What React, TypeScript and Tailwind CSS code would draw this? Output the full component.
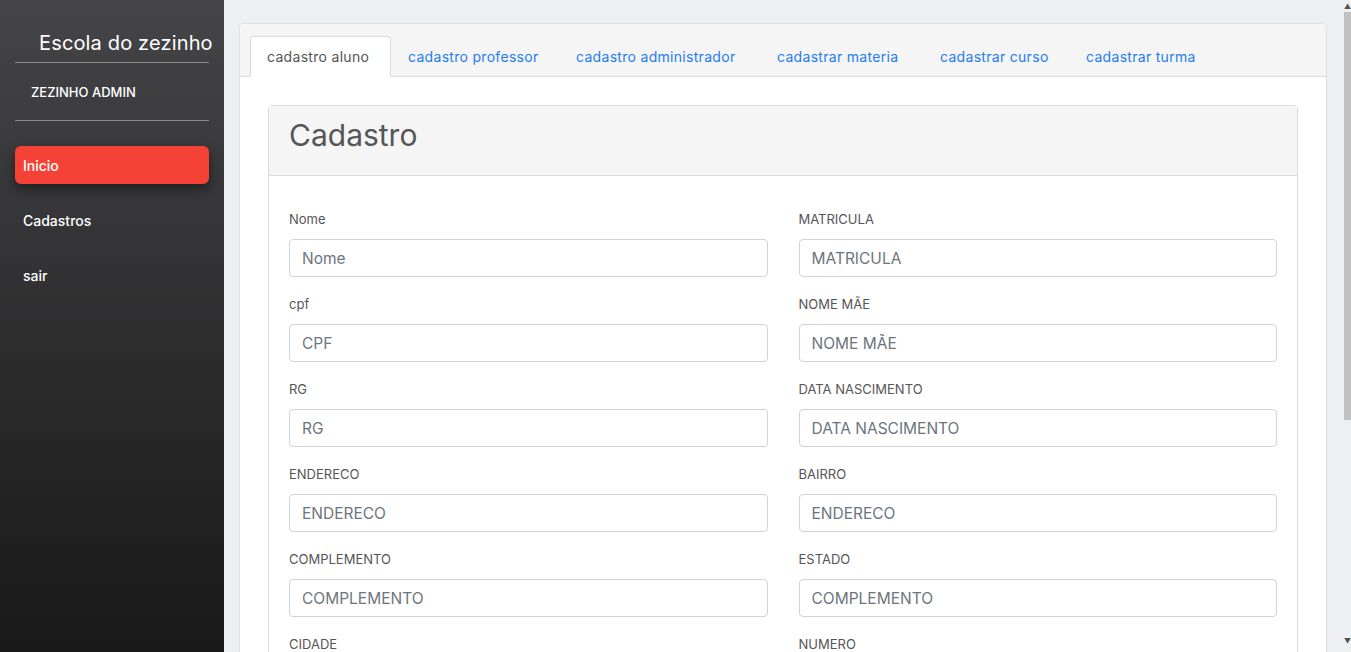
const tabs = [
  { label: "cadastro aluno", w: "w-[141px]", active: true },
  { label: "cadastro professor", w: "w-[168px]" },
  { label: "cadastro administrador", w: "w-[201px]" },
  { label: "cadastrar materia", w: "w-[163px]" },
  { label: "cadastrar curso", w: "w-[146px]" },
  { label: "cadastrar turma", w: "w-[150px]" },
];

const fields: [string, string][] = [
  ["Nome", "Nome"],
  ["MATRICULA", "MATRICULA"],
  ["cpf", "CPF"],
  ["NOME MÃE", "NOME MÃE"],
  ["RG", "RG"],
  ["DATA NASCIMENTO", "DATA NASCIMENTO"],
  ["ENDERECO", "ENDERECO"],
  ["BAIRRO", "ENDERECO"],
  ["COMPLEMENTO", "COMPLEMENTO"],
  ["ESTADO", "COMPLEMENTO"],
  ["CIDADE", "CIDADE"],
  ["NUMERO", "NUMERO"],
  ["CEP", "CEP"],
  ["TELEFONE", "TELEFONE"],
];

function Field({ label, placeholder }: { label: string; placeholder: string }) {
  return (
    <div className="mb-[17px]">
      <label className="block h-5 leading-5 text-[13px] text-[#555] mb-[10px]">{label}</label>
      <input
        placeholder={placeholder}
        className="block w-full h-[38px] px-[12px] border border-[#ced4da] rounded-[4px] bg-white text-[15.5px] text-[#495057] placeholder:text-[#6c757d] outline-none"
      />
    </div>
  );
}

export default function App() {
  return (
    <div
      className="flex h-screen overflow-hidden bg-[#eeeff3]"
      style={{ fontFamily: "Inter, 'Open Sans', sans-serif" }}
    >
      {/* Sidebar */}
      <aside className="w-[224px] shrink-0 h-full bg-gradient-to-b from-[#454548] to-[#191919] text-white px-[15px]">
        <div className="h-[63px] border-b border-white/40 pl-[24px] pt-[30px] whitespace-nowrap">
          <span className="text-[20px] leading-[26px] font-normal tracking-[0.15px]">Escola do zezinho</span>
        </div>
        <div className="h-[58px] border-b border-white/40 pl-[16px] pt-[2px] flex items-center text-[13px] font-medium">
          ZEZINHO ADMIN
        </div>
        <nav className="mt-[25px] flex flex-col gap-[17px]">
          <a className="h-[38px] flex items-center px-[8px] rounded-[6px] bg-[#f44336] text-[14px] font-medium shadow-[0_5px_12px_rgba(0,0,0,0.45)]">
            Inicio
          </a>
          <a className="h-[38px] flex items-center px-[8px] text-[14px] font-medium">Cadastros</a>
          <a className="h-[38px] flex items-center px-[8px] text-[14px] font-medium">sair</a>
        </nav>
      </aside>

      {/* Main */}
      <main className="flex-1 h-full overflow-hidden pl-[15px] pr-[9px] pt-[23px]">
        <div className="border border-[#dfdfe2] rounded-[5px] bg-white overflow-hidden">
          <div className="bg-[#f5f5f6] border-b border-[#dcdcdf] px-[10px] pt-[12px] flex">
            {tabs.map((t) =>
              t.active ? (
                <div
                  key={t.label}
                  className={`${t.w} h-[41px] -mb-px bg-white border border-[#dcdcdf] border-b-white rounded-t-[4px] pl-[16px] flex items-center text-[14px] tracking-[0.3px] text-[#555]`}
                >
                  {t.label}
                </div>
              ) : (
                <div key={t.label} className={`${t.w} h-[40px] pl-[17px] flex items-center text-[14px] tracking-[0.3px] text-[#1f7cf2]`}>
                  {t.label}
                </div>
              )
            )}
          </div>

          <div className="p-[28px]">
            <div className="border border-[#dcdcdf] rounded-[4px]">
              <div className="h-[70px] bg-[#f5f5f6] border-b border-[#dcdcdf] px-[20px] pt-[9px]">
                <h1 className="text-[30px] leading-[40px] text-[#555] font-normal">Cadastro</h1>
              </div>
              <div className="px-[20px] pt-[33px] pb-[10px] grid grid-cols-2 gap-x-[31px]">
                {fields.map(([l, p], i) => (
                  <Field key={i} label={l} placeholder={p} />
                ))}
              </div>
            </div>
          </div>
        </div>
      </main>

      {/* scrollbar */}
      <div className="w-[15px] shrink-0 h-full flex flex-col items-end">
        <div className="h-[12px] w-[7px] flex items-center justify-end text-[7px] leading-none text-[#505050]">▲</div>
        <div className="w-[7px] h-[408px] bg-[#c1c1c1]" />
        <div className="flex-1" />
        <div className="h-[14px] w-[7px] flex items-start justify-end text-[7px] leading-none text-[#505050]">▼</div>
      </div>
    </div>
  );
}
